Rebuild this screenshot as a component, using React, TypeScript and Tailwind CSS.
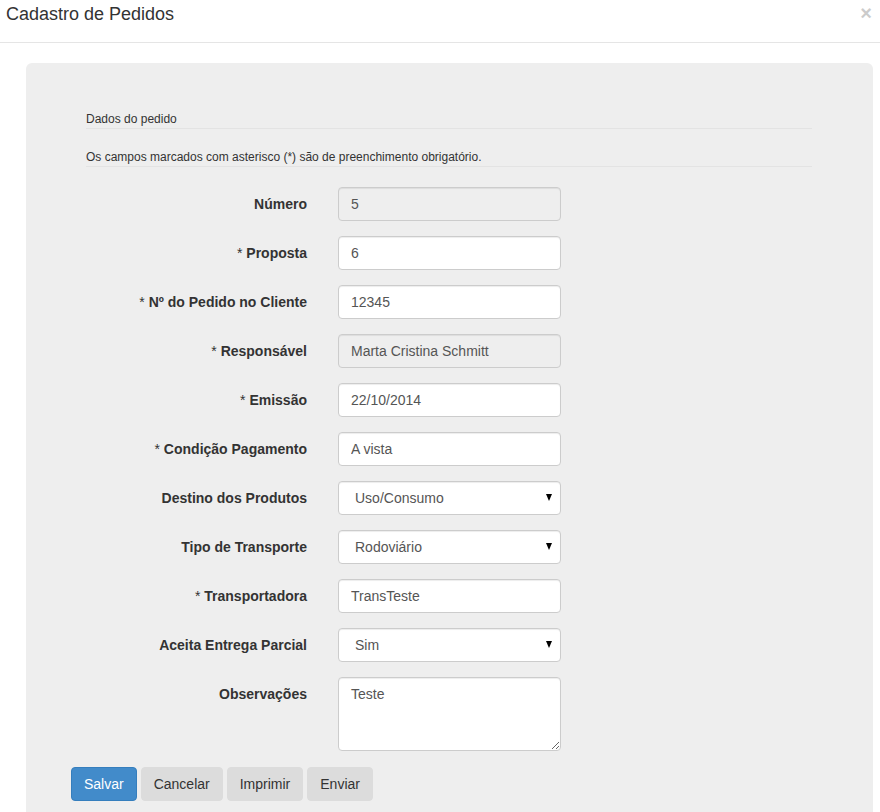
import React from 'react';

type Field = {
  label: string;
  required?: boolean;
  value: string;
  kind: 'input' | 'disabled' | 'select' | 'textarea';
};

const fields: Field[] = [
  { label: 'Número', value: '5', kind: 'disabled' },
  { label: 'Proposta', required: true, value: '6', kind: 'input' },
  { label: 'Nº do Pedido no Cliente', required: true, value: '12345', kind: 'input' },
  { label: 'Responsável', required: true, value: 'Marta Cristina Schmitt', kind: 'disabled' },
  { label: 'Emissão', required: true, value: '22/10/2014', kind: 'input' },
  { label: 'Condição Pagamento', required: true, value: 'A vista', kind: 'input' },
  { label: 'Destino dos Produtos', value: 'Uso/Consumo', kind: 'select' },
  { label: 'Tipo de Transporte', value: 'Rodoviário', kind: 'select' },
  { label: 'Transportadora', required: true, value: 'TransTeste', kind: 'input' },
  { label: 'Aceita Entrega Parcial', value: 'Sim', kind: 'select' },
  { label: 'Observações', value: 'Teste', kind: 'textarea' },
];

function Control({ field }: { field: Field }) {
  const base =
    'w-[223px] rounded border border-[#ccc] text-[14px] text-[#555] outline-none shadow-[inset_0_1px_1px_rgba(0,0,0,0.075)]';

  if (field.kind === 'select') {
    return (
      <div className={`${base} relative flex h-[34px] items-center bg-white pl-4`}>
        <span>{field.value}</span>
        <span className="absolute right-[8px] top-[12px] h-0 w-0 border-x-[3.5px] border-t-[7px] border-x-transparent border-t-black" />
      </div>
    );
  }

  if (field.kind === 'textarea') {
    return (
      <textarea
        readOnly
        defaultValue={field.value}
        className={`${base} block h-[74px] resize-y bg-white px-3 py-[6px] leading-[20px]`}
      />
    );
  }

  return (
    <input
      readOnly
      defaultValue={field.value}
      className={`${base} block h-[34px] px-3 ${field.kind === 'disabled' ? 'bg-[#eee]' : 'bg-white'}`}
    />
  );
}

export default function App() {
  return (
    <div className="min-h-[812px] bg-white font-['Liberation_Sans',Arial,sans-serif] text-[#333]">
      {/* header */}
      <div className="flex h-[43px] items-start justify-between border-b border-[#e5e5e5] pl-[6px] pr-[8px] pt-[2px]">
        <h4 className="text-[18px] leading-[25px]">Cadastro de Pedidos</h4>
        <button className="mt-[1px] text-[20px] font-bold leading-[20px] text-[#000] opacity-20">×</button>
      </div>

      {/* body */}
      <div className="h-[769px] overflow-hidden pl-[26px] pr-[7px] pt-[20px]">
        <div className="h-[780px] rounded-[6px] bg-[#eee] pt-[49px]">
          <div className="ml-[60px] mr-[61px]">
            <div className="border-b border-[#e3e3e3] pb-[1px] text-[12px] leading-[15px]">Dados do pedido</div>
            <div className="mt-[21px] border-b border-[#e3e3e3] pb-[1px] text-[12px] leading-[15px]">
              Os campos marcados com asterisco (*) são de preenchimento obrigatório.
            </div>
          </div>

          <div className="mt-[20px] flex flex-col gap-[15px]">
            {fields.map((f) => (
              <div key={f.label} className="flex">
                <label className="w-[281px] pt-[7px] text-right text-[14px] font-bold leading-[20px]">
                  {f.required && <span className="font-normal">* </span>}
                  {f.label}
                </label>
                <div className="ml-[31px]">
                  <Control field={f} />
                </div>
              </div>
            ))}
          </div>

          <div className="ml-[45px] mt-[16px] flex gap-[4px] text-[14px] leading-[20px]">
            <button className="h-[34px] rounded border border-[#357ebd] bg-[#428bca] px-3 text-white">Salvar</button>
            <button className="h-[34px] rounded border border-[#dcdcdc] bg-[#dcdcdc] px-3 text-[#333]">Cancelar</button>
            <button className="h-[34px] rounded border border-[#dcdcdc] bg-[#dcdcdc] px-3 text-[#333]">Imprimir</button>
            <button className="h-[34px] rounded border border-[#dcdcdc] bg-[#dcdcdc] px-3 text-[#333]">Enviar</button>
          </div>
        </div>
      </div>
    </div>
  );
}
